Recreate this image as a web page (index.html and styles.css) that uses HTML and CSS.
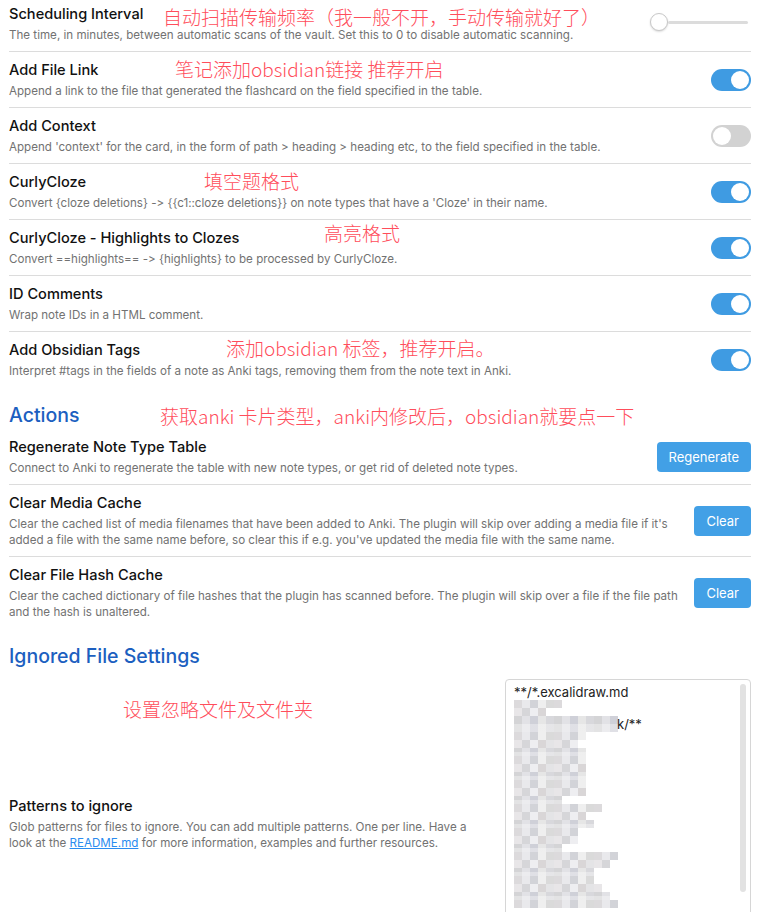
FILE: index.html
```html
<!DOCTYPE html>
<html>
<head>
    <meta charset="UTF-8">
    <title>Obsidian to Anki - Settings</title>
    <link rel="stylesheet" href="styles.css">
</head>
<body>
    <div class="settings">
        <div class="setting-item first">
            <div class="setting-info">
                <div class="setting-name">Scheduling Interval</div>
                <div class="setting-desc">The time, in minutes, between automatic scans of the vault. Set this to 0 to disable automatic scanning.</div>
            </div>
            <div class="setting-control">
                <div class="slider"><span class="slider-thumb"></span><span class="slider-track"></span></div>
            </div>
        </div>
        <div class="setting-item">
            <div class="setting-info">
                <div class="setting-name">Add File Link</div>
                <div class="setting-desc">Append a link to the file that generated the flashcard on the field specified in the table.</div>
            </div>
            <div class="setting-control"><div class="toggle on"></div></div>
        </div>
        <div class="setting-item">
            <div class="setting-info">
                <div class="setting-name">Add Context</div>
                <div class="setting-desc">Append 'context' for the card, in the form of path &gt; heading &gt; heading etc, to the field specified in the table.</div>
            </div>
            <div class="setting-control"><div class="toggle"></div></div>
        </div>
        <div class="setting-item">
            <div class="setting-info">
                <div class="setting-name">CurlyCloze</div>
                <div class="setting-desc">Convert {cloze deletions} -&gt; {{c1::cloze deletions}} on note types that have a 'Cloze' in their name.</div>
            </div>
            <div class="setting-control"><div class="toggle on"></div></div>
        </div>
        <div class="setting-item">
            <div class="setting-info">
                <div class="setting-name">CurlyCloze - Highlights to Clozes</div>
                <div class="setting-desc">Convert ==highlights== -&gt; {highlights} to be processed by CurlyCloze.</div>
            </div>
            <div class="setting-control"><div class="toggle on"></div></div>
        </div>
        <div class="setting-item">
            <div class="setting-info">
                <div class="setting-name">ID Comments</div>
                <div class="setting-desc">Wrap note IDs in a HTML comment.</div>
            </div>
            <div class="setting-control"><div class="toggle on"></div></div>
        </div>
        <div class="setting-item">
            <div class="setting-info">
                <div class="setting-name">Add Obsidian Tags</div>
                <div class="setting-desc">Interpret #tags in the fields of a note as Anki tags, removing them from the note text in Anki.</div>
            </div>
            <div class="setting-control"><div class="toggle on"></div></div>
        </div>

        <h3 class="section-title">Actions</h3>
        <div class="setting-item first">
            <div class="setting-info">
                <div class="setting-name">Regenerate Note Type Table</div>
                <div class="setting-desc">Connect to Anki to regenerate the table with new note types, or get rid of deleted note types.</div>
            </div>
            <div class="setting-control"><button class="mod-cta">Regenerate</button></div>
        </div>
        <div class="setting-item">
            <div class="setting-info">
                <div class="setting-name">Clear Media Cache</div>
                <div class="setting-desc">Clear the cached list of media filenames that have been added to Anki. The plugin will skip over adding a media file if it's added a file with the same name before, so clear this if e.g. you've updated the media file with the same name.</div>
            </div>
            <div class="setting-control"><button class="mod-cta">Clear</button></div>
        </div>
        <div class="setting-item">
            <div class="setting-info">
                <div class="setting-name">Clear File Hash Cache</div>
                <div class="setting-desc">Clear the cached dictionary of file hashes that the plugin has scanned before. The plugin will skip over a file if the file path and the hash is unaltered.</div>
            </div>
            <div class="setting-control"><button class="mod-cta">Clear</button></div>
        </div>

        <h3 class="section-title">Ignored File Settings</h3>
        <div class="setting-item first patterns">
            <div class="setting-info">
                <div class="setting-name">Patterns to ignore</div>
                <div class="setting-desc">Glob patterns for files to ignore. You can add multiple patterns. One per line. Have a look at the <a href="#">README.md</a> for more information, examples and further resources.</div>
            </div>
            <div class="setting-control">
                <div class="textarea">
                    <div class="ta-line">**/*.excalidraw.md</div>
                    <div class="pix p1" style="width:48px"></div>
                    <div class="pix p2" style="width:32px"></div>
                    <div class="pix-row"><div class="pix tall p3" style="width:104px"></div><span class="ta-tail">k/**</span></div>
                    <div class="pix p1" style="width:72px"></div>
                    <div class="pix p2" style="width:64px"></div>
                    <div class="pix p3" style="width:72px"></div>
                    <div class="pix p1" style="width:72px"></div>
                    <div class="pix p2" style="width:72px"></div>
                    <div class="pix p3" style="width:72px"></div>
                    <div class="pix p1" style="width:72px"></div>
                    <div class="pix p2" style="width:72px"></div>
                    <div class="pix p3" style="width:48px"></div>
                    <div class="pix p1" style="width:88px"></div>
                    <div class="pix p2" style="width:72px"></div>
                    <div class="pix p3" style="width:80px"></div>
                    <div class="pix p1" style="width:64px"></div>
                    <div class="pix p2" style="width:64px"></div>
                    <div class="pix p3" style="width:48px"></div>
                    <div class="pix p1" style="width:104px"></div>
                    <div class="pix p2" style="width:96px"></div>
                    <div class="pix p3" style="width:80px"></div>
                    <div class="pix p1" style="width:80px"></div>
                    <div class="pix p2" style="width:88px"></div>
                    <div class="pix p3" style="width:96px"></div>
                    <div class="pix p1" style="width:104px"></div>
                    <div class="scrollbar"></div>
                </div>
            </div>
        </div>

        <!-- handwritten notes laid over the screenshot -->
        <div class="note" style="left:154px; top:11px">自动扫描传输频率（我一般不开，手动传输就好了）</div>
        <div class="note" style="left:166px; top:63px">笔记添加obsidian链接 推荐开启</div>
        <div class="note" style="left:195px; top:175px">填空题格式</div>
        <div class="note" style="left:315px; top:227px">高亮格式</div>
        <div class="note" style="left:217px; top:342px">添加obsidian 标签，推荐开启。</div>
        <div class="note" style="left:151px; top:410px">获取anki 卡片类型，anki内修改后，obsidian就要点一下</div>
        <div class="note" style="left:114px; top:703px">设置忽略文件及文件夹</div>
    </div>
</body>
</html>
```

FILE: styles.css
```css
body {
    margin: 0;
    background: #ffffff;
    font-family: Inter, "Noto Sans", sans-serif;
    font-feature-settings: "calt" 0;
    color: #1a1a1a;
    overflow: hidden;
    height: 912px;
}

.settings {
    position: relative;
    width: 742px;
    margin: -4px 0 0 9px;
}

.setting-item {
    display: flex;
    align-items: center;
    padding: 9px 0 8px;
    border-top: 1px solid #dcdcdc;
}

.setting-item.first {
    border-top: none;
}

.setting-info {
    flex: 1;
    min-width: 0;
    padding-right: 14px;
}

.setting-name {
    font-size: 14.6px;
    line-height: 18px;
    font-weight: 500;
    color: #111;
}

.setting-desc {
    margin-top: 4px;
    font-size: 11.6px;
    line-height: 16px;
    color: #727272;
}

.setting-desc a {
    color: #2a8cf0;
    text-decoration: underline;
}

.setting-control {
    flex-shrink: 0;
    display: flex;
    justify-content: flex-end;
    align-items: center;
}

.section-title {
    margin: 16px 0 2px;
    font-size: 19.5px;
    line-height: 24px;
    font-weight: 500;
    color: #1c5fc0;
}

/* toggle */
.toggle {
    position: relative;
    width: 40px;
    height: 22px;
    border-radius: 11px;
    background: #d2d2d2;
}

.toggle::after {
    content: "";
    position: absolute;
    top: 2px;
    left: 2px;
    width: 18px;
    height: 18px;
    border-radius: 50%;
    background: #fff;
}

.toggle.on {
    background: #3f9be2;
}

.toggle.on::after {
    left: 20px;
}

/* slider */
.slider {
    display: flex;
    align-items: center;
    width: 98px;
    margin-right: 3px;
    margin-top: -4px;
}

.slider-thumb {
    width: 16px;
    height: 16px;
    border-radius: 50%;
    border: 1px solid #c8c8c8;
    background: #fff;
    box-shadow: 0 1px 2px rgba(0,0,0,0.15);
    flex-shrink: 0;
}

.slider-track {
    flex: 1;
    height: 3px;
    background: #dcdcdc;
    border-radius: 2px;
}

/* buttons */
button.mod-cta {
    height: 30px;
    padding: 0 12px;
    border: none;
    border-radius: 4px;
    background: #42a0e6;
    color: #fff;
    font-family: Inter, "Noto Sans", sans-serif;
    font-size: 13px;
}

/* textarea with blurred patterns */
.patterns .setting-info {
    padding-right: 30px;
}

.textarea {
    position: relative;
    box-sizing: border-box;
    width: 246px;
    height: 290px;
    padding: 4px 0 0 8px;
    border: 1px solid #d6d6d6;
    border-radius: 4px;
    overflow: hidden;
    font-size: 13px;
    color: #222;
}

.ta-line {
    line-height: 16px;
}

.pix-row {
    display: flex;
    align-items: center;
}

.ta-tail {
    line-height: 16px;
    margin-left: -1px;
}

.pix {
    height: 8px;
}

.pix.tall {
    height: 16px;
}

.p1 {
    background: repeating-linear-gradient(90deg, #dcdadc 0 8px, #e9e9ec 8px 16px, #d2d3d8 16px 24px, #efefef 24px 32px, #dadada 32px 40px);
}

.p2 {
    background: repeating-linear-gradient(90deg, #e8e6e8 0 8px, #d6d6d9 8px 16px, #eeeef1 16px 24px, #d9d6d7 24px 32px, #e4e4e6 32px 40px);
}

.p3 {
    background:
        linear-gradient(rgba(255,255,255,0) 50%, rgba(255,255,255,0.35) 50%),
        repeating-linear-gradient(90deg, #d4d4d6 0 8px, #e2e2e6 8px 16px, #cfd0d8 16px 24px, #e6e6e6 24px 32px, #d8d8dc 32px 40px);
}

.scrollbar {
    position: absolute;
    top: 4px;
    right: 4px;
    width: 6px;
    height: 208px;
    border-radius: 3px;
    background: #e2e2e2;
}

/* red annotations */
.note {
    position: absolute;
    font-family: "Noto Sans CJK SC", "Noto Sans", sans-serif;
    font-size: 19px;
    font-weight: 300;
    line-height: 20px;
    color: #ff4d5b;
    white-space: nowrap;
}
```
